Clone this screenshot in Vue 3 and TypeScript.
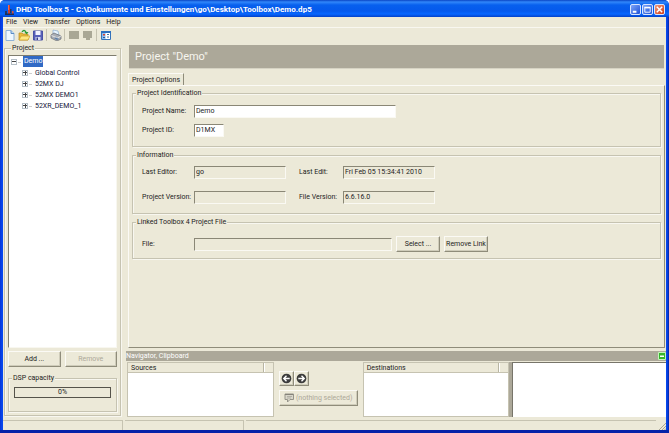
<script setup lang="ts">
import { ref } from 'vue'

const menus: string[] = ['File', 'View', 'Transfer', 'Options', 'Help']
const nodes: string[] = ['Global Control', '52MX DJ', '52MX DEMO1', '52XR_DEMO_1']
const projectName = ref('Demo')
const projectId = ref('D1MX')
const capacity = ref(0)
</script>

<template>
  <div class="window">
    <header class="titlebar">
      <svg class="app-icon" viewBox="0 0 10 12" aria-hidden="true">
        <path d="M0 7h2v3H0zM5 5h1.500v4H5z" fill="#23365f" />
        <path d="M3 1h2v9H3z" fill="#c9402f" />
        <path d="M3 1h1v5H3z" fill="#ef6a52" />
        <path d="M7 7h1.500v3H7z" fill="#d8503c" />
        <path d="M0 9.500h9V11H0z" fill="#1b2c55" />
      </svg>
      <h1>DHD Toolbox 5 - C:\Dokumente und Einstellungen\go\Desktop\Toolbox\Demo.dp5</h1>
      <div class="controls">
        <button type="button" class="ctl" aria-label="Minimize">
          <svg viewBox="0 0 10 10"><path d="M2 6.500h4v2H2z" fill="#fff" /></svg>
        </button>
        <button type="button" class="ctl" aria-label="Maximize">
          <svg viewBox="0 0 10 10"><path d="M2 3h6v5H2z" fill="none" stroke="#fff" /><path d="M1.500 2h7v1.500h-7z" fill="#fff" /></svg>
        </button>
        <button type="button" class="ctl close" aria-label="Close">
          <svg viewBox="0 0 10 10"><path d="M2 2l6 6M8 2l-6 6" stroke="#fff" stroke-width="1.600" /></svg>
        </button>
      </div>
    </header>

    <nav class="menubar">
      <button v-for="m in menus" :key="m" type="button">{{ m }}</button>
    </nav>

    <div class="toolbar">
      <button type="button" aria-label="New">
        <svg viewBox="0 0 12 12"><path d="M2 1.500h5l3 3v7H2z" fill="#eef7ff" stroke="#8fb2d8" /><path d="M7 1.500v3h3" fill="#b9d8f5" stroke="#5c8cc4" /></svg>
      </button>
      <button type="button" aria-label="Open">
        <svg viewBox="0 0 12 12"><path d="M1 4h3l1 1h5v6H1z" fill="#e9b93c" stroke="#b98a1c" stroke-width=".7" /><path d="M3 7h9l-2 4H1z" fill="#ffe680" stroke="#c99b25" stroke-width=".7" /><path d="M4 3q2-3 4 0" fill="none" stroke="#2d9b38" stroke-width="1.300" /><path d="M6.500 3h4L8.500 5.500z" fill="#2d9b38" /></svg>
      </button>
      <button type="button" aria-label="Save">
        <svg viewBox="0 0 12 12"><path d="M1.500 2h9v9h-9z" fill="#5961b8" stroke="#4a52a5" /><path d="M3.500 2h5v4h-5z" fill="#f3f4ff" /><path d="M3.500 8h5v3h-5z" fill="#d9def5" /><path d="M4.500 8.500H6V11H4.500z" fill="#39418d" /></svg>
      </button>
      <span class="sep" />
      <button type="button" aria-label="Print">
        <svg viewBox="0 0 12 12"><path d="M3 1l5 1 1 4-6-1z" fill="#e5f3ff" stroke="#7b9fc7" stroke-width=".6" /><path d="M1 6l3-2 7 3v3l-4 2-6-3z" fill="#aaaeb5" stroke="#676b73" stroke-width=".7" /><path d="M1.500 6.500l6 2.500L11 7" fill="none" stroke="#eef0f2" stroke-width=".8" /><path d="M4 9l3 2 2-1-3-1.500z" fill="#5d7fa8" /></svg>
      </button>
      <span class="sep" />
      <button type="button" disabled aria-label="Connect">
        <svg viewBox="0 0 12 12"><path d="M1 2h10v8H1z" fill="#a9a795" /></svg>
      </button>
      <button type="button" disabled aria-label="Comment">
        <svg viewBox="0 0 12 12"><path d="M1 2h9v7H8v2H4V9H1z" fill="#a9a795" /></svg>
      </button>
      <span class="sep" />
      <button type="button" aria-label="Properties">
        <svg viewBox="0 0 12 12"><path d="M1.500 2.500h9v8h-9z" fill="#fff" stroke="#3472ba" /><path d="M1 2h10v2H1z" fill="#2c6fc0" /><path d="M2 4h3.500v6H2z" fill="#8cbcf0" /><path d="M3 5h2v1.500H3z" fill="#d7422f" /><path d="M3 8h2v1H3z" fill="#245d9c" /><path d="M7 5.500h2M7 8h2" stroke="#456f9c" /></svg>
      </button>
    </div>

    <div class="workspace">
      <aside class="side">
        <fieldset class="group project">
          <legend>Project</legend>
          <div class="project-body">
            <div class="tree">
              <ul>
                <li class="root"><i class="toggle open" /><span class="selected">Demo</span></li>
                <li v-for="n in nodes" :key="n" class="child"><i class="toggle" /><span>{{ n }}</span></li>
              </ul>
            </div>
            <div class="side-actions">
              <button type="button" class="btn">Add ...</button>
              <button type="button" class="btn" disabled>Remove</button>
            </div>
            <fieldset class="group capacity">
              <legend>DSP capacity</legend>
              <div class="meter" role="progressbar" aria-label="DSP capacity" :aria-valuenow="capacity">{{ capacity }}%</div>
            </fieldset>
          </div>
        </fieldset>
      </aside>

      <main class="main">
        <h2 class="banner">Project "Demo"</h2>
        <div class="tabs"><button type="button" class="tab">Project Options</button></div>
        <section class="panel">
          <fieldset class="group ident">
            <legend>Project Identification</legend>
            <div class="row">
              <label for="name">Project Name:</label>
              <input id="name" v-model="projectName" class="field wide" type="text" />
            </div>
            <div class="row">
              <label for="pid">Project ID:</label>
              <input id="pid" v-model="projectId" class="field short" type="text" />
            </div>
          </fieldset>
          <fieldset class="group info">
            <legend>Information</legend>
            <div class="row">
              <label for="editor">Last Editor:</label>
              <input id="editor" class="field" type="text" value="go" readonly />
              <label for="edit" class="second">Last Edit:</label>
              <input id="edit" class="field" type="text" value="Fri Feb 05 15:34:41 2010" readonly />
            </div>
            <div class="row">
              <label for="pver">Project Version:</label>
              <input id="pver" class="field" type="text" value="" readonly />
              <label for="fver" class="second">File Version:</label>
              <input id="fver" class="field" type="text" value="6.6.16.0" readonly />
            </div>
          </fieldset>
          <fieldset class="group linked">
            <legend>Linked Toolbox 4 Project File</legend>
            <div class="row">
              <label for="file">File:</label>
              <input id="file" class="field file" type="text" value="" readonly />
              <button type="button" class="btn small">Select ...</button>
              <button type="button" class="btn small">Remove Link</button>
            </div>
          </fieldset>
        </section>

        <section class="navigator">
          <div class="nav-title">
            <h3>Navigator, Clipboard</h3>
            <button type="button" class="collapse" aria-label="Collapse">
              <svg viewBox="0 0 8 8"><path d="M.5.5h7v7h-7z" fill="#35b52b" stroke="#c4f5ba" /><path d="M2 3.500h4v1.500H2z" fill="#fff" /></svg>
            </button>
          </div>
          <div class="nav-body">
            <div class="list">
              <div class="list-head"><span>Sources</span><i /></div>
            </div>
            <div class="transfer">
              <div class="arrows">
                <button type="button" class="btn arrow" aria-label="Back">
                  <svg viewBox="0 0 12 12"><circle cx="6" cy="6" r="5.300" fill="#3c3c3c" /><path d="M9.500 6H3.500M6 3L3 6l3 3" fill="none" stroke="#fff" stroke-width="1.500" /></svg>
                </button>
                <button type="button" class="btn arrow" aria-label="Forward">
                  <svg viewBox="0 0 12 12"><circle cx="6" cy="6" r="5.300" fill="#3c3c3c" /><path d="M2.500 6h6M6 3l3 3-3 3" fill="none" stroke="#fff" stroke-width="1.500" /></svg>
                </button>
              </div>
              <button type="button" class="btn pick" disabled>
                <svg viewBox="0 0 10 10"><path d="M1 1h8.500v5.500H6L3.500 9V6.500H1z" fill="#d8d6ca" stroke="#96948a" /><path d="M1 1.500h8" stroke="#85837a" /><path d="M3 3.500h5M3 5h4" stroke="#a3a198" stroke-width=".7" /></svg>
                <span>(nothing selected)</span>
              </button>
            </div>
            <div class="list">
              <div class="list-head"><span>Destinations</span><i /></div>
            </div>
            <div class="splitter" />
            <div class="clipboard" />
          </div>
        </section>
      </main>
    </div>

    <footer class="status">
      <span class="cell first" /><span class="cell mid" /><span class="cell last" />
      <svg class="grip" viewBox="0 0 8 8" aria-hidden="true"><path d="M1 8l7-7M4 8l4-4M6.500 8L8 6.500" stroke="#aaa793" /></svg>
    </footer>
  </div>
</template>

<style>
body {
  margin: 0;
  background: #fff;
}
</style>

<style scoped>
* {
  box-sizing: border-box;
}
.window {
  display: flex;
  flex-direction: column;
  height: 100vh;
  padding: 0 3px 3px;
  overflow: hidden;
  border-radius: 5px 5px 0 0;
  background: linear-gradient(90deg, #0733d5 0, #0647ee 2px, #0647ee calc(100% - 2px), #0522a0 100%);
  box-shadow: inset 0 -3px #0522a8;
  color: #1c1c1c;
  font: 7px/10px Roboto, "Open Sans", sans-serif;
}
button,
input {
  margin: 0;
  padding: 0;
  font: inherit;
  color: inherit;
}
h1, h2, h3, ul {
  margin: 0;
  padding: 0;
}
svg {
  display: block;
}

/* Title bar */
.titlebar {
  display: flex;
  align-items: center;
  flex: none;
  height: 17px;
  margin: 0 -3px;
  padding: 2px 4px 0 5px;
  background: linear-gradient(#0a45c4 0, #3187fa 2px, #0760ee 5px, #0559ec 11px, #0767ff 14px, #0341c9 17px);
}
.app-icon {
  width: 10px;
  height: 12px;
}
h1 {
  flex: 1;
  margin-left: 1px;
  color: #fff;
  font: bold 8px/12px Roboto, "Open Sans", sans-serif;
  white-space: nowrap;
}
.controls {
  display: flex;
  gap: 1px;
}
.ctl {
  width: 11px;
  height: 11px;
  border: 1px solid #d9e6ff;
  border-radius: 2px;
  background: linear-gradient(135deg, #7da5f8, #1c50d8);
}
.ctl.close {
  background: linear-gradient(135deg, #f09a7e, #cf3a14);
}
.ctl svg {
  width: 9px;
  height: 9px;
}

/* Menu and tool bars */
.menubar {
  display: flex;
  flex: none;
  align-items: flex-end;
  gap: 6px;
  height: 11px;
  padding-left: 3px;
  background: #ece9d8;
  border-bottom: 1px solid #f8f7f0;
}
.menubar button {
  border: 0;
  background: none;
  line-height: 9px;
}
.toolbar {
  display: flex;
  flex: none;
  align-items: flex-start;
  gap: 2px;
  height: 15px;
  padding-top: 1px;
  padding-left: 1px;
  background: #ece9d8;
}
.toolbar button {
  width: 12px;
  height: 12px;
  border: 0;
  background: none;
}
.sep {
  width: 1px;
  height: 12px;
  margin-right: 1px;
  background: #c5c2b0;
}

/* Shared widgets */
.group {
  min-width: 0;
  margin: 0;
  padding: 0;
  border: 1px solid #c6c3b1;
  box-shadow: inset 1px 1px #f8f7f0, 1px 1px #f8f7f0;
}
legend {
  margin-left: 3px;
  padding: 0 1px;
  background: #ece9d8;
  line-height: 10px;
}
.btn {
  display: flex;
  align-items: center;
  justify-content: center;
  height: 16px;
  border: 1px solid;
  border-color: #fbfaf5 #8f8c7a #8f8c7a #fbfaf5;
  background: #ece9d8;
  box-shadow: inset -1px -1px #cfccba;
  white-space: nowrap;
}
.btn:disabled {
  color: #aca899;
}
.field {
  width: 92px;
  height: 13px;
  padding: 0 1px 1px;
  border: 1px solid;
  border-color: #8a8776 #faf9f3 #faf9f3 #8a8776;
  border-radius: 0;
  background: #fff;
  outline: 0;
}
.field:read-only {
  background: #ece9d8;
}
.wide {
  width: 202px;
}
.short {
  width: 30px;
}
.file {
  width: 198px;
}

/* Project column */
.workspace {
  display: grid;
  grid-template-columns: 119px minmax(0, 1fr);
  flex: 1;
  min-height: 0;
  background: #ece9d8;
}
.side {
  display: flex;
  padding: 0 1px 3px;
}
.project {
  flex: 1;
  padding: 2px 3px 3px;
}
.project-body {
  display: flex;
  flex-direction: column;
  height: 100%;
}
.tree {
  flex: 1;
  border: 1px solid;
  border-color: #7f7d6e #f8f7f0 #f8f7f0 #7f7d6e;
  background: #fff;
  color: #15153a;
}
ul {
  list-style: none;
}
li {
  display: flex;
  align-items: center;
  height: 11px;
  gap: 6px;
}
.root {
  padding-left: 2px;
}
.child {
  padding-left: 13px;
}
.child span {
  padding-left: 1px;
}
.root .selected {
  padding: 0 1px;
  background: #316ac5;
  color: #fff;
  line-height: 11px;
}
.toggle {
  position: relative;
  width: 6px;
  height: 6px;
  border: 1px solid #b4bec6;
  background: linear-gradient(#444, #444) center / 4px 1px no-repeat, linear-gradient(#444, #444) center / 1px 4px no-repeat;
}
.toggle::after {
  position: absolute;
  top: 2px;
  left: 6px;
  width: 3px;
  height: 1px;
  background: #cfcfcf;
  content: "";
}
.toggle.open {
  background: linear-gradient(#444, #444) center / 4px 1px no-repeat;
}
.side-actions {
  display: grid;
  grid-template-columns: 1fr 1fr;
  gap: 4px;
  margin: 3px 0 6px;
}
.capacity {
  height: 39px;
}
.meter {
  height: 11px;
  margin: 4px 5px 0;
  border: 1px solid #55534a;
  line-height: 9px;
  text-align: center;
}

/* Main column */
.main {
  display: flex;
  flex-direction: column;
  min-width: 0;
}
.banner {
  flex: none;
  height: 24px;
  margin: 2px 2px 4px 7px;
  padding-left: 6px;
  background: #aca899;
  border-bottom: 1px solid #d6d3c4;
  color: #f7f6ef;
  font: 11px/24px Roboto, "Open Sans", sans-serif;
}
.tabs {
  display: flex;
  flex: none;
  margin-left: 6px;
}
.tab {
  height: 12px;
  padding: 0 3px;
  border: 0;
  border-top: 1px solid #fbfaf5;
  border-left: 1px solid #fbfaf5;
  border-right: 1px solid #8f8c7a;
  background: #ece9d8;
  line-height: 12px;
}
.panel {
  display: flex;
  flex: 1;
  flex-direction: column;
  gap: 3px;
  min-height: 0;
  margin: 0 1px 3px 6px;
  padding: 2px 3px 0;
  border: 1px solid;
  border-color: #fbfaf5 #8f8c7a #8f8c7a #fbfaf5;
}
.row {
  display: flex;
  align-items: center;
  height: 16px;
  padding-left: 9px;
}
.row label {
  width: 52px;
  white-space: nowrap;
}
.row .second {
  width: 44px;
  margin-left: 13px;
}
.ident,
.info,
.linked {
  flex: none;
}
.ident {
  padding: 5px 0;
}
.ident .row {
  margin-bottom: 3px;
}
.info {
  padding: 4px 0 8px;
}
.info .row + .row {
  margin-top: 9px;
}
.linked {
  padding: 9px 0 6px;
}
.small {
  width: 44px;
  margin-left: 4px;
}

/* Navigator */
.navigator {
  display: flex;
  flex: none;
  flex-direction: column;
  height: 68px;
  padding-left: 4px;
}
.nav-title {
  display: flex;
  flex: none;
  align-items: center;
  justify-content: space-between;
  height: 10px;
  background: #aca899;
  color: #fff;
}
h3 {
  font: inherit;
}
.collapse {
  width: 8px;
  height: 8px;
  border: 0;
  background: none;
}
.nav-body {
  display: grid;
  grid-template-columns: minmax(0, 147fr) 89px minmax(0, 147fr) 3px minmax(0, 154fr);
  height: 56px;
  padding: 1px 0 0 1px;
}
.list {
  border: 1px solid #c6c3b1;
  background: #fff;
}
.list-head {
  display: flex;
  height: 10px;
  padding-left: 3px;
  background: #ece9d8;
  border-bottom: 1px solid #c6c3b1;
}
.list-head span {
  flex: 1;
}
.list-head i {
  width: 10px;
  border-left: 1px solid #b8b5a3;
  box-shadow: inset 1px 0 #fff;
}
.transfer {
  display: flex;
  flex-direction: column;
  gap: 4px;
  padding: 9px 5px 0;
}
.arrows {
  display: flex;
}
.arrow {
  width: 15px;
  height: 15px;
}
.arrow svg {
  width: 11px;
  height: 11px;
}
.pick {
  gap: 2px;
}
.pick svg {
  width: 10px;
  height: 10px;
}
.splitter {
  background: #aca899;
}
.clipboard {
  border-top: 1px solid #77756a;
  border-left: 1px solid #77756a;
  background: #fff;
}

/* Status bar */
.status {
  display: flex;
  flex: none;
  align-items: flex-end;
  gap: 2px;
  height: 11px;
  padding-top: 1px;
  background: #ece9d8;
}
.cell {
  height: 10px;
  border-top: 1px solid #c6c3b1;
  border-right: 1px solid #c6c3b1;
}
.first {
  width: 120px;
}
.mid {
  width: 119px;
}
.last {
  flex: 1;
  border-right: 0;
}
.grip {
  width: 8px;
  height: 8px;
}
</style>
